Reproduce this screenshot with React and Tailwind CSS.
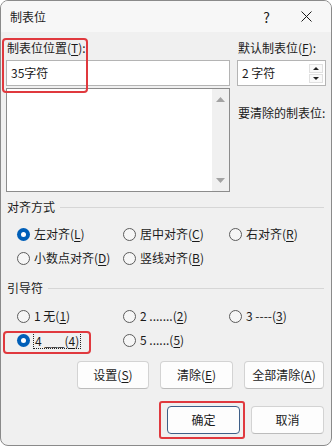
import React from "react";

const U = ({ children }) => <span className="underline underline-offset-[2px]">{children}</span>;

function Radio({ checked, children, focus }) {
  return (
    <div className="flex items-center h-4">
      {checked ? (
        <span className="w-[13px] h-[13px] rounded-full bg-[#005fb8] flex items-center justify-center shrink-0">
          <span className="w-[5px] h-[5px] rounded-full bg-white" />
        </span>
      ) : (
        <span className="w-[13px] h-[13px] rounded-full border border-[#5c5c5c] bg-[#f6f6f6] shrink-0" />
      )}
      <span
        className={
          focus
            ? "ml-[3px] px-[1px] leading-[15px] border border-dotted border-[#222]"
            : "ml-[4px] leading-4 whitespace-nowrap"
        }
      >
        {children}
      </span>
    </div>
  );
}

function Btn({ children, w, primary }) {
  return (
    <button
      className={
        "h-[28px] rounded-[4px] border bg-[#fdfdfd] text-[12px] text-[#1b1b1b] flex items-center justify-center " +
        (primary ? "border-[#3e5f88]" : "border-[#d3d3d3] border-b-[#bcbcbc]") +
        " " +
        w
      }
    >
      {children}
    </button>
  );
}

function Group({ title }) {
  return (
    <div className="flex items-center h-4 pl-[1px]">
      <span className="leading-4">{title}</span>
      <div className="flex-1 h-px bg-[#d6d6d6] ml-[5px] mr-[2px]" />
    </div>
  );
}

export default function App() {
  return (
    <div className="relative w-[332px] h-[446px] overflow-hidden bg-[#f0f0f0] border border-[#8a8a8a] rounded-[8px] text-[12px] text-[#1b1b1b] font-['Microsoft_YaHei_UI','Noto_Sans_CJK_SC',sans-serif]">
      <div className="h-[31px] flex items-center pl-[9px] bg-[#f7f7f7]">
        <span className="leading-4">制表位</span>
        <span className="ml-auto text-[14px] leading-4">?</span>
        <svg className="ml-[31px] mr-[19px]" width="11" height="11" viewBox="0 0 11 11">
          <path d="M0.5 0.5 L10.5 10.5 M10.5 0.5 L0.5 10.5" stroke="#1b1b1b" strokeWidth="1" fill="none" />
        </svg>
      </div>

      <div className="px-[5px]">
        <div className="grid grid-cols-[224px_89px] gap-x-[7px] pt-[8px]">
          <div className="flex flex-col">
            <span className="leading-4 pl-[1px]">
              制表位位置(<U>T</U>):
            </span>
            <div className="mt-[4px] h-[26px] border border-[#b4b4b4] bg-white flex items-center pl-[4px]">
              35字符
            </div>
            <div className="mt-[2px] h-[104px] border border-[#8c8c8c] bg-white flex justify-end">
              <div className="w-[17px] h-full bg-[#f0f0f0] flex flex-col items-center justify-between py-[8px]">
                <svg width="9" height="5" viewBox="0 0 9 5">
                  <path d="M0 5 L4.5 0 L9 5 Z" fill="#a3a3a3" />
                </svg>
                <svg width="9" height="5" viewBox="0 0 9 5">
                  <path d="M0 0 L4.5 5 L9 0 Z" fill="#a3a3a3" />
                </svg>
              </div>
            </div>
          </div>

          <div className="flex flex-col">
            <span className="leading-4 pl-[1px]">
              默认制表位(<U>F</U>):
            </span>
            <div className="mt-[4px] h-[26px] border border-[#b4b4b4] bg-white flex items-center pl-[4px]">
              <span>2 字符</span>
              <div className="ml-auto mr-[2px] w-[14px] flex flex-col gap-[1px]">
                <div className="h-[9px] border border-[#e0e0e0] bg-[#fafafa] flex items-center justify-center">
                  <svg width="6" height="3" viewBox="0 0 6 3">
                    <path d="M0 3 L3 0 L6 3 Z" fill="#222" />
                  </svg>
                </div>
                <div className="h-[9px] border border-[#e0e0e0] bg-[#fafafa] flex items-center justify-center">
                  <svg width="6" height="3" viewBox="0 0 6 3">
                    <path d="M0 0 L3 3 L6 0 Z" fill="#222" />
                  </svg>
                </div>
              </div>
            </div>
            <span className="mt-[19px] leading-4 pl-[1px] whitespace-nowrap">要清除的制表位:</span>
          </div>
        </div>

        <div className="mt-[7px]">
          <Group title="对齐方式" />
        </div>
        <div className="mt-[11px] grid grid-cols-[106px_106px_1fr] gap-y-[8px] pl-[11px]">
          <Radio checked>
            左对齐(<U>L</U>)
          </Radio>
          <Radio>
            居中对齐(<U>C</U>)
          </Radio>
          <Radio>
            右对齐(<U>R</U>)
          </Radio>
          <Radio>
            小数点对齐(<U>D</U>)
          </Radio>
          <Radio>
            竖线对齐(<U>B</U>)
          </Radio>
        </div>

        <div className="mt-[14px]">
          <Group title="引导符" />
        </div>
        <div className="mt-[12px] grid grid-cols-[106px_106px_1fr] gap-y-[8px] pl-[11px]">
          <Radio>
            1 无(<U>1</U>)
          </Radio>
          <Radio>
            2 .......(<U>2</U>)
          </Radio>
          <Radio>
            3 ----(<U>3</U>)
          </Radio>
          <Radio checked focus>
            4 ___(<U>4</U>)
          </Radio>
          <Radio>
            5 ......(<U>5</U>)
          </Radio>
        </div>

        <div className="mt-[13px] flex justify-end gap-[11px] pr-[2px]">
          <Btn w="w-[72px]">
            设置(<U>S</U>)
          </Btn>
          <Btn w="w-[73px]">
            清除(<U>E</U>)
          </Btn>
          <Btn w="w-[80px]">
            全部清除(<U>A</U>)
          </Btn>
        </div>

        <div className="mt-[17px] flex justify-end gap-[11px] pr-[2px]">
          <Btn w="w-[73px]" primary>
            确定
          </Btn>
          <Btn w="w-[73px]">取消</Btn>
        </div>
      </div>

      <div className="absolute left-[1px] top-[37px] w-[86px] h-[55px] border-2 border-[#e0393e] rounded-[4px]" />
      <div className="absolute left-[2px] top-[330px] w-[88px] h-[23px] border-2 border-[#e0393e] rounded-[4px]" />
      <div className="absolute left-[158px] top-[400px] w-[86px] h-[38px] border-2 border-[#e0393e] rounded-[3px]" />
    </div>
  );
}
